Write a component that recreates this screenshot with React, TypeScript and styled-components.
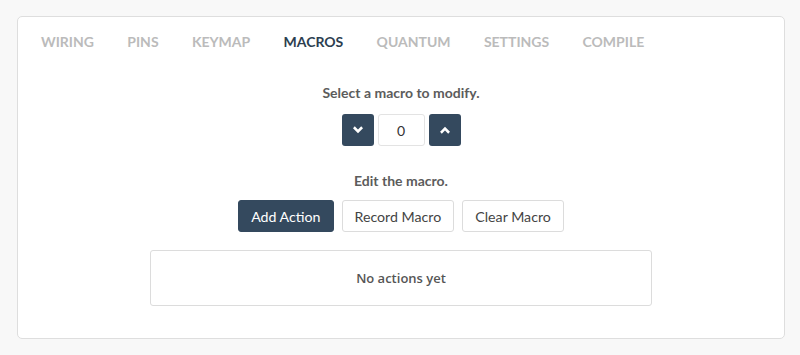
import styled, { createGlobalStyle } from 'styled-components';
import { useState } from 'react';

const GlobalStyle = createGlobalStyle`
  * {
    box-sizing: border-box;
  }

  body {
    margin: 0;
    background-color: #f8f8f8;
    font-family: Lato, 'Liberation Sans', sans-serif;
    color: #555;
  }
`;

const tabs = ['Wiring', 'Pins', 'Keymap', 'Macros', 'Quantum', 'Settings', 'Compile'];

const Chevron = ({ up }: { up?: boolean }) => (
  <svg width="10" height="8" viewBox="0 0 10 8">
    <path
      d={up ? 'M1.8 5.8 L5 2.6 L8.2 5.8' : 'M1.8 2.2 L5 5.4 L8.2 2.2'}
      fill="none"
      stroke="#fff"
      strokeWidth="2.6"
      strokeLinecap="square"
    />
  </svg>
);

const App = () => {
  const [macro, setMacro] = useState(0);
  const [active, setActive] = useState('Macros');

  return (
    <Page>
      <GlobalStyle />
      <Card>
        <TabBar>
          {tabs.map((tab) => (
            <Tab key={tab} $active={tab === active} onClick={() => setActive(tab)}>
              {tab}
            </Tab>
          ))}
        </TabBar>
        <Content>
          <Label>Select a macro to modify.</Label>
          <Stepper>
            <StepButton onClick={() => setMacro(Math.max(0, macro - 1))}>
              <Chevron />
            </StepButton>
            <NumberInput value={macro} readOnly />
            <StepButton onClick={() => setMacro(macro + 1)}>
              <Chevron up />
            </StepButton>
          </Stepper>
          <Label className="edit">Edit the macro.</Label>
          <ButtonRow>
            <ActionButton $primary>Add Action</ActionButton>
            <ActionButton>Record Macro</ActionButton>
            <ActionButton>Clear Macro</ActionButton>
          </ButtonRow>
          <ActionList>No actions yet</ActionList>
        </Content>
      </Card>
    </Page>
  );
};

export default App;

const Page = styled.div`
  padding: 16px 15px 16px 17px;
`;

const Card = styled.div`
  width: 768px;
  height: 323px;
  background-color: #fff;
  border: 1px solid #dedede;
  border-radius: 5px;
  padding: 0 23px;
`;

const TabBar = styled.div`
  display: flex;
  gap: 33.3px;
  height: 48px;
  align-items: center;
`;

const Tab = styled.div<{ $active?: boolean }>`
  font-size: 14px;
  font-weight: 700;
  text-transform: uppercase;
  color: ${(p) => (p.$active ? '#2c3e50' : '#bbbbbb')};
  cursor: pointer;
`;

const Content = styled.div`
  display: flex;
  flex-direction: column;
  align-items: center;
  padding-top: 19px;
`;

const Label = styled.div`
  font-size: 14px;
  font-weight: 700;
  color: #5c5c5c;
  line-height: 18px;

  &.edit {
    margin-top: 26px;
  }
`;

const Stepper = styled.div`
  display: flex;
  gap: 4px;
  margin-top: 12px;
`;

const StepButton = styled.button`
  width: 32px;
  height: 32px;
  border: none;
  border-radius: 3px;
  background-color: #34495e;
  display: flex;
  align-items: center;
  justify-content: center;
  padding: 0;
  cursor: pointer;
`;

const NumberInput = styled.input`
  width: 47px;
  height: 32px;
  border: 1px solid #e3e3e3;
  border-radius: 3px;
  text-align: center;
  font-family: Lato, 'Liberation Sans', sans-serif;
  font-size: 14px;
  color: #333;
  outline: none;
`;

const ButtonRow = styled.div`
  display: flex;
  gap: 8px;
  margin-top: 10px;
`;

const ActionButton = styled.button<{ $primary?: boolean }>`
  height: 32px;
  padding: 0 12px;
  border-radius: 3px;
  border: 1px solid ${(p) => (p.$primary ? '#34495e' : '#dcdcdc')};
  background-color: ${(p) => (p.$primary ? '#34495e' : '#fff')};
  color: ${(p) => (p.$primary ? '#fff' : '#444')};
  font-family: Lato, 'Liberation Sans', sans-serif;
  font-size: 14.2px;
  cursor: pointer;
`;

const ActionList = styled.div`
  width: 502px;
  height: 56px;
  margin-top: 18px;
  border: 1px solid #dcdcdc;
  border-radius: 3px;
  display: flex;
  align-items: center;
  justify-content: center;
  font-family: 'Open Sans', 'Liberation Sans', sans-serif;
  font-size: 13px;
  font-weight: 600;
  color: #555;
`;
